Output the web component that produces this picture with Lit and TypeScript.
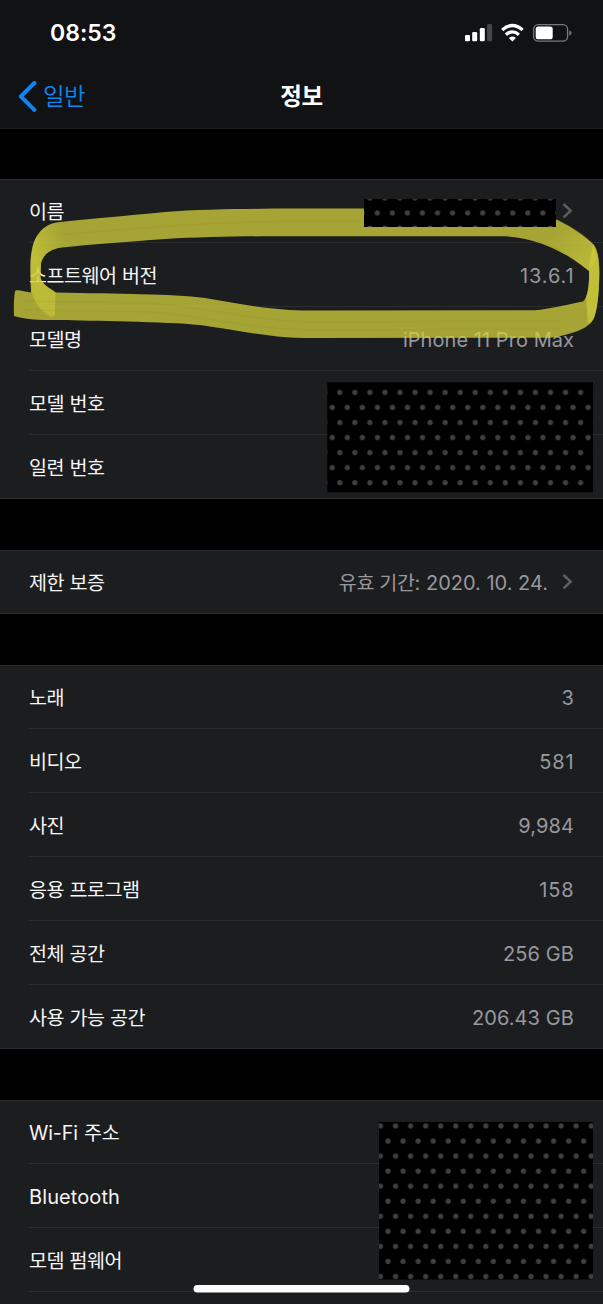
import { LitElement, html, css, svg, nothing } from "lit";
import { customElement, property } from "lit/decorators.js";

interface Row {
  label: string;
  value?: string;
  chevron?: boolean;
  kind?: string;
}

const SECTIONS: Row[][] = [
  [
    { label: "이름", chevron: true },
    { label: "소프트웨어 버전", value: "13.6.1", kind: "version" },
    { label: "모델명", value: "iPhone 11 Pro Max", kind: "model" },
    { label: "모델 번호" },
    { label: "일련 번호" },
  ],
  [{ label: "제한 보증", value: "유효 기간: 2020. 10. 24.", chevron: true, kind: "date" }],
  [
    { label: "노래", value: "3" },
    { label: "비디오", value: "581", kind: "wide" },
    { label: "사진", value: "9,984" },
    { label: "응용 프로그램", value: "158", kind: "wide" },
    { label: "전체 공간", value: "256 GB" },
    { label: "사용 가능 공간", value: "206.43 GB" },
  ],
  [
    { label: "Wi-Fi 주소", kind: "wifi" },
    { label: "Bluetooth", kind: "latin" },
    { label: "모뎀 펌웨어" },
    { label: "" },
  ],
];

@customElement("status-bar")
class StatusBar extends LitElement {
  static styles = css`
    :host {
      display: flex;
      justify-content: space-between;
      align-items: center;
      height: 66px;
      padding: 0 31px 0 50px;
      box-sizing: border-box;
    }
    .time {
      font-size: 23px;
      font-weight: 600;
      letter-spacing: 0;
      color: #fff;
    }
    .icons {
      display: block;
    }
  `;
  render() {
    return html`
      <span class="time">08:53</span>
      <svg class="icons" width="108" height="20" viewBox="464 23 108 20">
        <g fill="#fff">
          <rect x="465" y="35" width="5" height="6.3" rx="1.3" />
          <rect x="472.2" y="32" width="5" height="9.3" rx="1.3" />
          <rect x="479.8" y="28" width="5" height="13.3" rx="1.3" />
          <rect x="487.1" y="24" width="5" height="17.3" rx="1.3" fill="#454648" />
          <path d="M512.4 41.6 L508.9 38 Q512.4 35.2 515.9 38 Z" />
        </g>
        <g fill="none" stroke="#fff" stroke-width="3.3">
          <path d="M502.2 30 Q512.4 21.1 522.6 30" />
          <path d="M505.9 34.7 Q512.4 29.1 518.9 34.7" />
        </g>
        <rect x="533.6" y="24.6" width="34" height="16.6" rx="4.6" fill="none" stroke="#77787a" stroke-width="1.3" />
        <rect x="535.7" y="26.5" width="17" height="12.8" rx="2.6" fill="#fff" />
        <path d="M569.3 30.2 Q571.6 31.2 571.6 33 Q571.6 34.8 569.3 35.8 Z" fill="#77787a" />
      </svg>
    `;
  }
}

@customElement("nav-bar")
class NavBar extends LitElement {
  static styles = css`
    :host {
      display: grid;
      grid-template-columns: 1fr auto 1fr;
      align-items: center;
      height: 62px;
      padding: 0 18px;
    }
    .back {
      display: flex;
      align-items: center;
      gap: 6px;
      color: #0f84f5;
      font-size: 23.5px;
      font-weight: 350;
      letter-spacing: -0.6px;
    }
    .back svg {
      display: block;
    }
    .back span,
    .title {
      padding-bottom: 4px;
    }
    .title {
      font-size: 23.5px;
      font-weight: 600;
      letter-spacing: -0.4px;
      color: #fff;
    }
  `;
  render() {
    return html`
      <div class="back">
        <svg width="19" height="32" viewBox="0 0 19 32">
          <path d="M16.4 2 L2.8 15.4 L16.4 28.8" fill="none" stroke="#0f84f5" stroke-width="4" stroke-linecap="round" stroke-linejoin="round" />
        </svg>
        <span>일반</span>
      </div>
      <div class="title">정보</div>
      <div></div>
    `;
  }
}

@customElement("info-row")
class InfoRow extends LitElement {
  @property({ attribute: false }) row!: Row;
  static styles = css`
    :host {
      display: block;
      height: 64px;
      padding-left: 29px;
    }
    .line {
      display: flex;
      align-items: center;
      height: 64px;
      box-sizing: border-box;
      padding: 1px 29px 0 0;
      border-bottom: 1px solid #2b2c2e;
    }
    :host(.last) {
      padding-left: 0;
    }
    :host(.last) .line {
      padding-left: 29px;
    }
    .label {
      flex: 1;
      padding-bottom: 2px;
      color: #f5f5f6;
      font-size: 19.6px;
      letter-spacing: -0.55px;
      word-spacing: 0.6px;
    }
    .label.latin {
      padding: 2px 0 0;
      letter-spacing: 0.1px;
      font-size: 20px;
    }
    .label.wifi {
      letter-spacing: -0.1px;
    }
    .value {
      padding-top: 2px;
      color: #98989e;
      font-size: 20px;
      letter-spacing: 0.1px;
    }
    .value.model {
      letter-spacing: 0.05px;
    }
    .value.version,
    .value.wide {
      letter-spacing: 0.9px;
      margin-right: -0.6px;
    }
    .value.date {
      padding: 0 0 1px;
    }
    .ko {
      font-size: 19.6px;
      letter-spacing: -0.35px;
    }
    .date .digits {
      letter-spacing: 0;
    }
    .chevron {
      display: block;
      margin-left: 14px;
      margin-right: 1px;
    }
  `;

  private renderValue(r: Row) {
    if (r.kind !== "date") return r.value;
    const split = r.value!.indexOf(":");
    return html`<span class="ko">${r.value!.slice(0, split)}</span><span class="digits">${r.value!.slice(split)}</span>`;
  }

  render() {
    const r = this.row;
    return html`<div class="line">
      <span class="label ${r.kind ?? ""}">${r.label}</span>
      ${r.value ? html`<span class="value ${r.kind ?? ""}">${this.renderValue(r)}</span>` : nothing}
      ${r.chevron
        ? html`<svg class="chevron" width="11" height="18" viewBox="0 0 11 18">
            <path d="M1.5 2 L8.7 8.7 L1.5 15.4" fill="none" stroke="#5e5f63" stroke-width="2.5" />
          </svg>`
        : nothing}
    </div>`;
  }
}

const redaction = (id: string, x: number, y: number, w: number, h: number, dx: number, dy: number) => svg`
  <defs>
    <pattern id=${id} x=${dx - 7.525} y=${dy - 7.525} width="15.05" height="30.1" patternUnits="userSpaceOnUse">
      <circle cx="7.525" cy="7.525" r="2.6" fill="#404040" />
      <circle cx="0" cy="22.575" r="2.6" fill="#404040" />
      <circle cx="15.05" cy="22.575" r="2.6" fill="#404040" />
    </pattern>
  </defs>
  <rect x=${x} y=${y} width=${w} height=${h} fill="#000" />
  <rect x=${x} y=${y} width=${w} height=${h} fill="url(#${id})" />
`;

@customElement("markup-layer")
class MarkupLayer extends LitElement {
  static styles = css`
    :host,
    svg {
      display: block;
    }
  `;
  render() {
    return html`<svg width="603" height="1304" viewBox="0 0 603 1304">
      <defs>
        <filter id="soft" x="-5%" y="-5%" width="110%" height="110%" color-interpolation-filters="sRGB"><feGaussianBlur stdDeviation="0.7" /></filter>
        <linearGradient id="leftFade" gradientUnits="userSpaceOnUse" x1="32" y1="248" x2="64" y2="236">
          <stop offset="0" stop-color="#d3d13c" stop-opacity="0.55" />
          <stop offset="0.5" stop-color="#d3d13c" stop-opacity="0.28" />
          <stop offset="1" stop-color="#d3d13c" stop-opacity="0" />
        </linearGradient>
        <linearGradient id="rightFade" gradientUnits="userSpaceOnUse" x1="599" y1="260" x2="556" y2="226">
          <stop offset="0" stop-color="#d3d13c" stop-opacity="0.5" />
          <stop offset="1" stop-color="#d3d13c" stop-opacity="0" />
        </linearGradient>
      </defs>
      <g filter="url(#soft)">
        <path
          fill="#d3d13c"
          fill-opacity="0.75"
          fill-rule="evenodd"
          d="M17 290 L31 292.5 C30 275 30 258 33 245 C36 235 43 225 56 222.5 C85 219 125 216 165 212 C205 209 250 208.8 300 208.6 L520 208.6 C545 211 575 227 594 245 C598 250 599.5 262 599.3 275 C599 295 597 313 593 320 C588 328 575 334 550 337.8 L303 338 C270 337.5 235 330 200 325 C165 321.5 90 321 60 320 C35 320.5 25 319 14 316 C13.5 305 14 297 15 291 Z
             M41 263 C43 255 50 249 62 247.5 C90 244.5 125 242 165 239 C205 236.6 250 236.2 300 236.2 L505 236.2 C540 238 568 254 589 271 C589.5 285 588 297 583 301.5 C565 305 550 309 535 310.3 L303 310.5 C265 309.5 235 303 205 298 C170 293.5 120 294 56 292.5 C50 288 42 285 40.5 277 Z"
        />
        <path fill="url(#leftFade)" d="M30.8 278 C30 258 30 258 33 245 C36 235 43 225 56 222.5 L75 220 L75 246 L62 247.5 C50 249 43 255 41 263 L40.6 278 Z" />
        <path fill="#d3d13c" fill-opacity="0.5" d="M30.8 278 L40.6 278 C42 285 50 288 55.5 293 L55 315 L51 317 C42 312 35 304 31.5 292 Z" />
        <path fill="url(#rightFade)" d="M556 218 C575 227 587 237 594 245 L596 260 L589 271 C568 254 556 247 545 243 Z" />
        <path fill="#d3d13c" fill-opacity="0.6" d="M593 245 C598 250 599.5 262 599.3 275 C599 295 597 313 593 320 L588 324 L586 298 C588.5 290 589.5 280 589 266 Z" />
        <g fill="none" stroke="#8f8e2c" stroke-opacity="0.16" stroke-width="1.2">
          <path d="M60 235 C120 230 180 223 300 221 L520 221" />
          <path d="M20 301 L150 303 C210 308 250 320 310 322 L560 321" />
          <path d="M20 310 L150 312 C210 317 250 329 310 330 L560 329" />
        </g>
      </g>
      ${redaction("dotsA", 364, 199, 192, 28, 377.3, 213)}
      ${redaction("dotsB", 327.3, 382.3, 265.7, 110, 339.8, 392.4)}
      ${redaction("dotsC", 379, 1122, 214, 157.5, 380.5, 1126)}
      <rect x="193.5" y="1285" width="216" height="7.6" rx="3.8" fill="#fff" />
    </svg>`;
  }
}

@customElement("app-root")
class AppRoot extends LitElement {
  static styles = css`
    :host {
      display: block;
      position: relative;
      width: 603px;
      height: 1304px;
      overflow: hidden;
      background: #000;
      font-family: Inter, "Noto Sans CJK KR", sans-serif;
      font-feature-settings: "calt" 0;
    }
    .header {
      background: #111214;
      border-bottom: 1px solid #1a1b1d;
    }
    .list {
      display: flex;
      flex-direction: column;
      gap: 51px;
      padding-top: 50px;
    }
    .section {
      background: #1c1d1f;
      box-shadow: inset 0 1px 0 #2a2b2d;
    }
    .overlay {
      position: absolute;
      inset: 0;
    }
  `;
  render() {
    return html`
      <div class="header">
        <status-bar></status-bar>
        <nav-bar></nav-bar>
      </div>
      <div class="list">
        ${SECTIONS.map(
          (rows) => html`<div class="section">
            ${rows.map((row, i) => html`<info-row class=${i === rows.length - 1 ? "last" : ""} .row=${row}></info-row>`)}
          </div>`
        )}
      </div>
      <markup-layer class="overlay"></markup-layer>
    `;
  }
}
